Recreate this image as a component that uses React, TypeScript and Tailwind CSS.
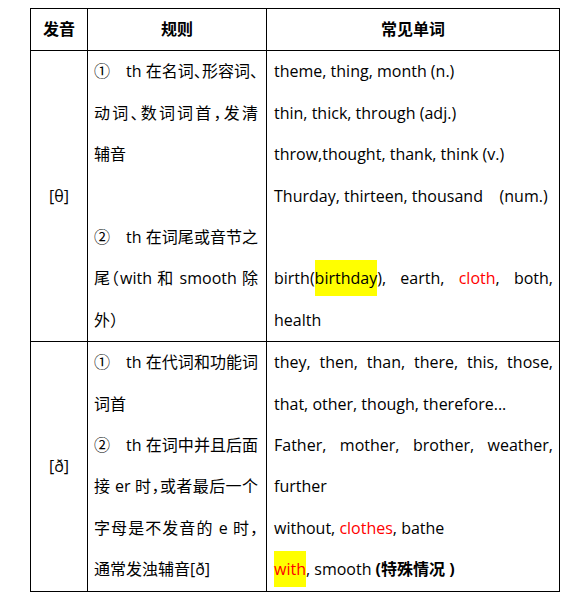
import React from "react";

const font = "font-['Open_Sans','Noto_Sans_CJK_SC',sans-serif]";

// a line that is stretched to the cell width
function J({ children }: { children: React.ReactNode }) {
  return (
    <div className="whitespace-nowrap text-justify [text-align-last:justify]">{children}</div>
  );
}

function L({ children }: { children?: React.ReactNode }) {
  return <div className="whitespace-pre">{children ?? "\u00a0"}</div>;
}

function Mark({ children, red }: { children: React.ReactNode; red?: boolean }) {
  return (
    <span className={`bg-[#ffff00] py-[7px] ${red ? "text-[#ff0000]" : ""}`}>
      {children}
    </span>
  );
}

export default function App() {
  return (
    <div className={`min-h-[605px] bg-white pt-2 pl-[30px] ${font}`}>
      <table className="w-[529px] table-fixed border-collapse text-[16px] leading-[41.4px] text-black">
        <colgroup>
          <col className="w-[57px]" />
          <col className="w-[179px]" />
          <col className="w-[293px]" />
        </colgroup>
        <thead>
          <tr>
            <th className="border border-black p-0 text-center font-bold">发音</th>
            <th className="border border-black p-0 text-center font-bold">规则</th>
            <th className="border border-black p-0 text-center font-bold">常见单词</th>
          </tr>
        </thead>
        <tbody>
          <tr>
            <td className="border border-black p-0 text-center align-middle">[θ]</td>
            <td className="border border-black py-0 pr-2 pl-[6px] align-top [font-feature-settings:'halt']">
              <J>①　th 在名词、形容词、</J>
              <J>动词、数词词首，发清</J>
              <L>辅音</L>
              <L />
              <J>②　th 在词尾或音节之</J>
              <J>尾（with 和 smooth 除</J>
              <L>外）</L>
            </td>
            <td className="border border-black py-0 pr-[6px] pl-[7px] align-top">
              <L>theme, thing, month (n.)</L>
              <L>thin, thick, through (adj.)</L>
              <L>throw,thought, thank, think (v.)</L>
              <L>Thurday, thirteen, thousand    (num.)</L>
              <L />
              <J>
                birth(<Mark>birthday</Mark>), earth, <span className="text-[#ff0000]">cloth</span>, both,
              </J>
              <L>health</L>
            </td>
          </tr>
          <tr>
            <td className="border border-black p-0 text-center align-middle">[ð]</td>
            <td className="border border-black py-0 pr-2 pl-[6px] align-top [font-feature-settings:'halt']">
              <J>①　th 在代词和功能词</J>
              <L>词首</L>
              <J>②　th 在词中并且后面</J>
              <J>接 er 时，或者最后一个</J>
              <J>字母是不发音的 e 时，</J>
              <L>通常发浊辅音[ð]</L>
            </td>
            <td className="border border-black py-0 pr-[6px] pl-[7px] align-top">
              <J>they, then, than, there, this, those,</J>
              <L>that, other, though, therefore...</L>
              <J>Father, mother, brother, weather,</J>
              <L>further</L>
              <L>
                without, <span className="text-[#ff0000]">clothes</span>, bathe
              </L>
              <L>
                <Mark red>with</Mark>, smooth <span className="font-bold">(特殊情况 )</span>
              </L>
            </td>
          </tr>
        </tbody>
      </table>
    </div>
  );
}
